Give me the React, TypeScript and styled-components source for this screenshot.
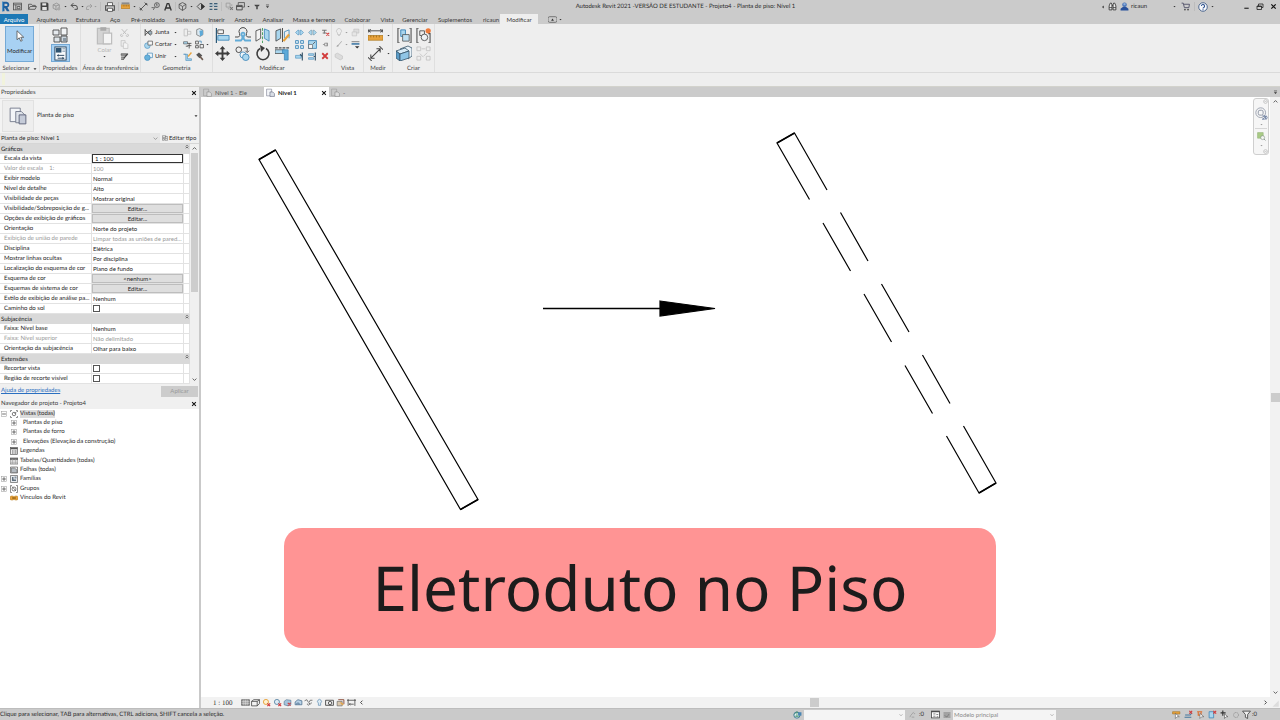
import React from 'react';
import styled, { createGlobalStyle } from 'styled-components';

const GlobalStyle = createGlobalStyle`
  *, *::before, *::after { box-sizing: border-box; }
  html, body, #root { margin: 0; padding: 0; }
  body {
    font: 6px/10px Lato, "Open Sans", sans-serif;
    color: #2b2b2b;
    background: #fff;
    text-rendering: geometricPrecision;
    overflow: hidden;
  }
  button, input, select { font: inherit; color: inherit; margin: 0; padding: 0; border: 0; background: none; border-radius: 0; outline: none; min-width: 0; }
  svg { display: block; flex: none; }
`;

/* ---------- icons, all on a 16 unit grid ---------- */

const K = '#4a4a4a';
const B = '#3e86b8';
const L = '#a9d6ee';
const G = '#bdbdbd';
const O = '#e8a33d';
const R = '#d23b3b';

const s = (stroke = K, w = 1.4) => ({ fill: 'none', stroke, strokeWidth: w });

const cross = (x: number, y: number, r = 2.5, w = 2) => (
  <path d={`M${x - r} ${y - r}l${2 * r} ${2 * r}M${x + r} ${y - r}l${-2 * r} ${2 * r}`} {...s(R, w)} />
);

const icons: Record<string, React.ReactNode> = {
  revit: <><path d="M3 1h6.5a4.3 4.3 0 0 1 1.3 8.3L14 15h-4L7.200 10H6.500v5H3z" fill="#1d5f9e" /><path d="M6.500 4h2.600a1.600 1.600 0 0 1 0 3.400H6.500z" fill="#cbcbcb" /><path d="M3 1h1.500v14H3z" fill="#4b96cf" /></>,
  home: <><rect x="1" y="2" width="14" height="12" {...s()} /><path d="M1 5h14M5 5v9M7.500 8h5v4h-5z" {...s()} /></>,
  open: <><path d="M1 13V4h5l1.500 2H13v2M1 13l3-5h11l-2.500 5z" {...s()} /></>,
  save: <><path d="M1 1h12l2 2v12H1z" fill="#444" /><path d="M4 2h7v4H4zM4 9h8v5H4z" fill="#e4e4e4" /></>,
  sync: <><path d="M2 5l6-3 5 3v6l-5 3-6-3zM2 5l5 2 6-2M7 7v7" {...s('#8d8d8d')} /><circle cx="12" cy="12" r="3" fill="#aaa" /></>,
  undo: <path d="M6 2L2 6l4 4M2 6h7a4 4 0 0 1 4 4v3H8" {...s('#444', 1.7)} />,
  redo: <path d="M10 2l4 4-4 4M14 6H7a4 4 0 0 0-4 4v3h5" {...s('#999', 1.6)} />,
  print: <><path d="M4 6V1h8v5" fill="#fff" stroke={K} strokeWidth="1.300" /><path d="M1 6h14v7H1z" {...s(K, 1.7)} /><path d="M4 10h8v5H4z" fill="#fff" stroke={K} strokeWidth="1.300" /></>,
  ruler: <><path d="M1 2h14" {...s()} /><rect x="0" y="5" width="16" height="7" fill={O} stroke="#9b6a18" strokeWidth=".8" /><path d="M4 5v3M7 5v3M10 5v3M13 5v3" {...s('#76500f', 0.8)} /></>,
  dim: <path d="M3 13L13 3M1 10l5 5M10 1l5 5M12 3h2v2M2 12v2h2" {...s('#444', 1.5)} />,
  tag: <><circle cx="10.500" cy="5.500" r="4.300" {...s()} /><path d="M10.500 3.200v4.500M9 4.200l1.500-1M7 9l-3 5M1 10h4" {...s()} /></>,
  letterA: <path d="M1.500 15L6.500 1h3l5 14M4.500 10h7" {...s('#333', 2.6)} />,
  cube: <><path d="M8 1l6 3v7l-6 4-6-4V4zM2 4l6 4 6-4M8 8v7" {...s()} /></>,
  section: <><path d="M8 2l6 6-6 6-6-6z" {...s('#444', 1.6)} /><path d="M9 2l7 6-7 6z" fill="#333" /></>,
  thin: <><path d="M1 3h5M9 3h6M1 8h5M9 8h6M1 13h5M9 13h6" {...s('#3c5d76', 2.2)} /><path d="M1 5.500h14" {...s('#5b93b8', 0.8)} /></>,
  closeWin: <><path d="M2 2h7v7H2z" {...s('#999')} /><path d="M5 12h3M12 4v3" {...s('#999')} /><path d="M9 9l5 5M14 9l-5 5" {...s('#777', 1.8)} /></>,
  windows: <><path d="M4 5V1h11v8h-3" {...s()} /><path d="M1 6h10v8H1zM1 8h10" {...s(K, 1.7)} /></>,
  funnelT: <path d="M1 2h14l-2 4h-3v8H6V6H3z" fill="#444" />,
  barDown: <><path d="M3 3h10" {...s('#333', 2)} /><path d="M3 7h10l-5 6z" fill="#333" /></>,
  caret: <path d="M2 5h12l-6 7z" fill="#333" />,
  caretG: <path d="M2 5h12l-6 7z" fill="#999" />,
  caretL: <path d="M11 2v12L4 8z" fill="#333" />,
  chev: <path d="M2 5l6 6 6-6" {...s('#777', 2)} />,
  chevU: <path d="M2 11l6-6 6 6" {...s('#444', 2.6)} />,
  chevD: <path d="M2 5l6 6 6-6" {...s('#444', 2.6)} />,
  chevL: <path d="M11 2L5 8l6 6" {...s('#333', 2.8)} />,
  chevR: <path d="M5 2l6 6-6 6" {...s('#333', 2.8)} />,
  dblUp: <path d="M3 6l5-5 5 5M3 13l5-5 5 5" {...s('#333', 2.6)} />,
  bino: <><path d="M2 14V7l2-5h2l1 3v9zM14 14V7l-2-5h-2L9 5v9z" fill="#eee" stroke="#333" strokeWidth="1.500" /><path d="M7 6h2M2 10h5M9 10h5" {...s('#333')} /></>,
  user: <><circle cx="8" cy="5" r="4" fill="#3f6cb3" /><path d="M1 15v-3l4-3h6l4 3v3z" fill="#27509b" /><path d="M6 2h4v4H6z" fill="#8daedb" /></>,
  cart: <><path d="M1 2h3l2 8h8l1-6H5" {...s('#4a4a63', 1.5)} /><circle cx="7" cy="13.500" r="1.500" fill="#444" /><circle cx="12.500" cy="13.500" r="1.500" fill="#444" /></>,
  help: <><circle cx="8" cy="8" r="6.800" fill="#f7f9fc" stroke="#2f4e7d" strokeWidth="1.300" /><path d="M5.500 6.500a2.500 2.500 0 1 1 3.700 2.200q-1.200.6-1.200 1.600M8 11.500v1.700" {...s('#2b4f8c', 1.7)} /></>,
  min: <path d="M3 12h10" {...s('#222', 2.6)} />,
  restore: <path d="M5 6V2h9v7h-3M2 6h9v7H2zM2 7h9" {...s('#222', 1.6)} />,
  close: <path d="M3 3l10 10M13 3L3 13" {...s('#111', 2.8)} />,
  pill: <><rect x="0" y="3" width="16" height="10" rx="3" {...s('#555', 1.3)} /><path d="M5.500 10h5L8 6z" fill="#333" /></>,

  cursor: <path d="M4 1v12l3-2.600L9 15l2-1-2-4.300h4z" fill="#fff" stroke="#555" strokeWidth="1.100" />,
  typeProps: <><path d="M1 3h6v5H1z" fill="#e6eaee" stroke={K} strokeWidth=".9" /><path d="M9 1h6v7H9z" fill="#f2f4f6" stroke={K} strokeWidth=".9" /><path d="M2 10h6v5H2z" fill="#dfe5ea" stroke={K} strokeWidth=".9" /><path d="M9 9h6v6H9z" fill="#ccd6de" stroke={K} strokeWidth=".9" /><path d="M11 11h3v3h-3z" fill="#8a98a4" /></>,
  props: <><rect x="2" y="1" width="12" height="14" fill="#f8fafc" stroke="#2f4b63" strokeWidth="1" /><path d="M3 2h6v5H3z" fill="#2f5471" /><path d="M10 3h3M10 5.500h3" {...s('#6f8ca3', 1)} /><path d="M5 10h7M5 13h7" {...s('#2f4b63', 1)} /><path d="M4 10l2-1.500v3zM12 13l-2-1.500v3z" fill="#2f4b63" /></>,
  paste: <><path d="M2 2h10v13H2z" fill="#d4d4d4" stroke={G} strokeWidth="1" /><path d="M4.500 1h5v3h-5z" fill="#aaa" /><path d="M7 6h7v9H7z" fill="#f4f4f4" stroke={G} strokeWidth="1" /></>,
  cut: <path d="M3 2l8 9M13 2L5 11M3 11a2 2 0 1 0 2 2M13 11a2 2 0 1 1-2 2" {...s(G, 1.7)} />,
  copyG: <><path d="M2 1h7v10H2z" {...s(G, 1.2)} /><path d="M6 5h5l3 3v7H6z" fill="#f4f4f4" stroke={G} strokeWidth="1.200" /></>,
  match: <><path d="M2 8h6l-1 6H2z" fill="#777" /><path d="M2 3h10v3H2z" fill="#999" stroke={K} /><path d="M6 12l8-9" {...s('#444', 2.2)} /><path d="M2 11h5" {...s('#ddd', 1)} /></>,
  cope: <><path d="M2 2v12M2 4l10 9M2 12L13 3" {...s('#444', 1.6)} /><path d="M7 6h7v5H9z" fill="#9fb5c2" stroke={K} /></>,
  cutG: <><circle cx="6" cy="10" r="5" fill={L} stroke={B} /><path d="M7 2h8v7H7z" fill="#f7f7f7" stroke={K} strokeWidth="1.200" /></>,
  join: <><path d="M6 2h9v8H6z" fill="#eef5f9" stroke={B} strokeWidth="1.200" /><circle cx="6" cy="10" r="5" fill="#67b2dc" stroke={B} /></>,
  wallG: <><path d="M2 2h6v12H2z" {...s(G)} /><path d="M8 6h6v5H8z" {...s(G)} /></>,
  paint: <><path d="M3 3l5-2 6 3v8l-5 3-6-3z" fill="#dce9f1" stroke={K} /><path d="M8 5l6-1v8l-5 3z" fill="#5ca9d8" /></>,
  beam: <><path d="M1 3h7v4H1z" fill={L} stroke={K} /><path d="M8 6h7M8 10h7M11 6v9M5 11h4" {...s(K, 1.5)} /></>,
  rects: <><path d="M1 2h5v5H1zM1 10h5v4H1zM9 8h6v6H9z" {...s()} /><path d="M7 2h4v4" {...s(B)} /></>,
  split: <><path d="M1 4h4v11h10v-3H8V4z" fill={L} stroke={B} /><path d="M9 8l6-7" {...s(O, 2.4)} /></>,
  hammer: <><path d="M2 5l5-4 6 5-5 5z" fill="#555" /><path d="M8 7l6 7" {...s('#6d5a50', 2.8)} /></>,

  align: <><path d="M1.500 0v16" {...s('#2b5876', 1.3)} /><path d="M3 2h6v4H3z" fill="#f5f5f5" stroke={K} strokeWidth=".9" /><path d="M3 8h12v5H3z" fill={L} stroke={B} strokeWidth=".9" /></>,
  offset: <><path d="M0 10h3.500q2-1 1-3.500a4 4 0 1 1 7 0q-1 2.500 1 3.500H16" {...s(K, 1)} /><path d="M0 13.500h6q2.500-2 1-5a1.600 1.600 0 1 1 2 0q-1.500 3 1 5h6" {...s('#63acd7', 1.8)} /></>,
  mirrorA: <><path d="M1 3v11l5-3V1z" fill="#f4f4f4" stroke={K} strokeWidth=".9" /><path d="M10 1v10l5 3V3z" fill={L} stroke={B} strokeWidth=".9" /><path d="M8 0v16" stroke="#47a05e" strokeDasharray="3 1.500" /></>,
  mirrorD: <><path d="M1 3v11l5-3V1z" fill={L} stroke={K} strokeWidth=".9" /><path d="M10 11V4l5-2v9" {...s(B, 0.9)} /><path d="M8 0v15" {...s(K, 1)} /><path d="M9 14l6-7" {...s(O, 2.4)} /></>,
  move: <path d="M8 0l3 3.500H9v3.500h3.500V5L16 8l-3.500 3V9H9v3.500h2L8 16l-3-3.500h2V9H3.500v2L0 8l3.500-3v2H7V3.500H5z" fill="#3d3d3d" />,
  copy: <><circle cx="4" cy="4" r="3" {...s(K, 1)} /><path d="M9 2h4v4M11 5l2 2 2-2" {...s(K, 1)} /><circle cx="8.500" cy="9.500" r="3.200" fill="#eef6fa" stroke={B} strokeWidth=".9" /><circle cx="11.500" cy="12" r="3.500" fill={L} stroke={B} strokeWidth=".9" /></>,
  rotate: <><path d="M5 3.500a6 6 0 1 0 6 0" {...s('#3d3d3d', 1.6)} /><path d="M5 0l5 3-4 4z" fill="#3d3d3d" /></>,
  trim: <><path d="M0 4h10v4H0z" fill={L} stroke={K} strokeWidth=".8" /><path d="M8 4h6v11h-4V8H8z" fill="#5ca9d8" stroke={B} strokeWidth=".8" /><path d="M0 2h16" stroke={K} strokeWidth="1.200" strokeDasharray="3 1" /></>,
  splitEl: <><path d="M1 8l4-4h2v8H5zM15 8l-4-4H9v8h2z" fill={L} stroke={B} /></>,
  splitGap: <><path d="M1 8l4-4h2v8H5zM15 8l-4-4H9v8h2z" fill={L} stroke="#6d8ea3" /></>,
  unpin: <><path d="M2 4h8M6 4v6M3 9h6" {...s('#777', 1.8)} />{cross(12, 11)}</>,
  array: <path d="M1 1h5v5H1zM10 1h5v5h-5zM1 10h5v5H1zM10 10h5v5h-5z" fill="#d7ecf7" stroke={B} strokeWidth="1.500" />,
  scale: <><path d="M1 1h14v14H1z" fill={L} stroke={B} strokeWidth="1.500" /><path d="M1 8h7v7H1z" fill="#f6f6f6" stroke={K} /><path d="M9 7l4-4" {...s()} /></>,
  pin: <path d="M2 8h4M6 5v6h6V5zM12 4v8" {...s('#777', 1.5)} />,
  trimOne: <><path d="M1 6h10v5H1z" fill={L} stroke={B} /><path d="M13 1v14M9 4l4 4" {...s('#35546a', 2)} /></>,
  trimMany: <><path d="M1 3h9v3H1zM1 10h9v3H1z" fill={L} stroke={B} /><path d="M13 1v14M10 8h3" {...s('#35546a', 2)} /></>,
  del: cross(8, 8, 5.5, 3.6),

  bulb: <path d="M5 10a5 5 0 1 1 6 0v3H5zM6 15h4" {...s(G, 1.3)} />,
  boxesG: <><path d="M5 2h9v7H5z" fill="#ddd" stroke={G} /><path d="M2 7h8v7H2z" fill="#e6e6e6" stroke={G} /></>,
  brushG: <path d="M3 14q0-5 4-5l6-7 1 1-6 7q0 4-5 4z" fill="#aaa" />,
  lineW: <><path d="M1 3h14" {...s('#333', 1)} /><path d="M1 7h14" {...s('#2b6b9d', 2.5)} /><path d="M7 11h8l-4 4z" fill="#333" /></>,
  boxG: <path d="M2 4l4-2 9 5v5l-4 2-9-5z" fill="#dcdcdc" stroke={G} />,
  measure: <><path d="M0 3h16M0 1v4M16 1v4M3 1.500L0 3l3 1.500M13 1.500L16 3l-3 1.500" {...s(K, 1)} /><rect x="0" y="8" width="16" height="5" fill={O} stroke="#a87317" strokeWidth=".7" /><path d="M3 8v2M6 8v2M9 8v2M12 8v2" {...s('#85590f', 0.7)} /></>,
  dimension: <path d="M3 13L13 3M0 12l4 4M12 0l4 4M3 9v4h4M9 3h4v4" {...s('#444', 1.1)} />,
  group: <><path d="M3 0H1v16h2M13 0h2v16h-2" {...s(K, 1.1)} /><path d="M4 2h5v7H4z" fill={L} stroke={B} /><path d="M6 7h7v7H6z" fill="#bfe0f2" stroke={K} strokeWidth=".8" /></>,
  groupNew: <><path d="M3 0H1v16h2M13 6h2v10h-2" {...s(K, 1.1)} /><path d="M4 3h5v5H4z" {...s(K, 0.9)} /><circle cx="9" cy="10" r="3.500" fill="#edf1f4" stroke={K} strokeWidth=".9" /><circle cx="13" cy="3" r="2.800" fill="#ee7b3b" /></>,
  assembly: <><path d="M4 4l8-3 4 2v8l-4 3" fill="#e9f2f8" stroke="#35546a" strokeWidth=".8" /><path d="M0 6l9-3 4 3-9 3z" fill="#d6eaf6" stroke="#35546a" strokeWidth=".8" /><path d="M0 6l4 3v7l-4-3z" fill="#5a9cc8" stroke="#35546a" strokeWidth=".8" /><path d="M4 9l9-3v7l-9 3z" fill="#8fc5e6" stroke="#35546a" strokeWidth=".8" /></>,
  parts: <><path d="M1 1h4v4H1zM11 1h4v4h-4zM1 11h4v4H1zM11 11h4v4h-4z" {...s('#c6c6c6', 1)} /><path d="M6 3h4M4 8l4 4M12 7l-4 4" {...s('#c6c6c6', 1)} /></>,

  plan: <><path d="M1 2h9v12H1z" fill="#f3f5f8" stroke="#72788a" strokeWidth="1" /><path d="M7 7h5l3 3v5H7z" fill="#d9dee6" stroke="#5b6178" strokeWidth="1" /></>,
  viewThumb: <><path d="M1 1h9v12H1z" fill="#f3f5f8" stroke="#72788a" strokeWidth=".8" /><path d="M6 4h5l3 3v7H6z" fill="#dfe3ea" stroke="#72788a" strokeWidth=".8" /><path d="M9 7h6v8H9z" fill="#c5cbd8" stroke="#5b6178" strokeWidth=".8" /></>,
  planG: <><path d="M1 2h9v12H1z" {...s('#999', 1)} /><path d="M7 7h5l3 3v5H7z" fill="#ddd" stroke="#888" strokeWidth="1" /></>,
  editType: <><path d="M1 2h9v5H1zM1 9h5v5H1zM8 9h7v5H8z" {...s('#555', 1.3)} /><path d="M8 4h7v4" {...s('#555', 1.2)} /></>,

  plus: <><rect x="1" y="1" width="14" height="14" fill="#fff" stroke="#999" strokeWidth="1.400" /><path d="M3 8h10M8 3v10" {...s('#444', 2)} /></>,
  minus: <><rect x="1" y="1" width="14" height="14" fill="#fff" stroke="#999" strokeWidth="1.400" /><path d="M3 8h10" {...s('#444', 2)} /></>,
  views: <><path d="M4 1H1v3M12 1h3v3M4 15H1v-3M12 15h3v-3" {...s('#555', 1.3)} /><circle cx="8" cy="8" r="3.500" {...s('#555', 1.5)} /><path d="M9 7l4-3" {...s('#555')} /></>,
  legend: <><rect x="1" y="1" width="14" height="14" fill="#eee" stroke="#555" strokeWidth="1.300" /><path d="M1 3h14" {...s('#555', 3)} /><path d="M4 8h3M4 12h3M9 8h4M9 12h4" {...s('#666', 2)} /></>,
  table: <><rect x="0" y="2" width="16" height="12" fill="#eee" stroke="#555" strokeWidth="1.300" /><path d="M0 4h16" {...s('#555', 3)} /><path d="M0 8h16M0 11h16M5 4v10M11 4v10" {...s('#999', 1)} /></>,
  sheet: <><path d="M1 2h14v12H1z" fill="#eee" stroke="#555" strokeWidth="1.300" /><path d="M3 4h6l5 4v5H3z" fill="#b4bbc1" stroke="#555" /></>,
  family: <><path d="M1 1h14v14H1z" fill="#e6eaee" stroke="#555" strokeWidth="1.300" /><path d="M4 4v8h8V9H7V4z" fill="#60707d" /><path d="M9 3h4v4H9z" fill="#8493a0" /></>,
  groups: <><path d="M4 1H1v14h3M12 1h3v14h-3" {...s('#555', 1.3)} /><path d="M4 3l8 9" {...s('#555')} /><circle cx="8" cy="8" r="4" {...s('#555', 1.4)} /></>,
  link: <><rect x="0" y="4" width="8" height="8" rx="3" fill={O} stroke="#b37511" /><rect x="8" y="4" width="8" height="8" rx="3" fill={O} stroke="#b37511" /><path d="M4 8h8" {...s('#7d5108', 1.8)} /></>,

  detail: <><path d="M1 3h14v10H1z" fill="#999" stroke="#444" /><path d="M1 6h14M1 9.500h14M5 3v10M8 3v10M11 3v10" {...s('#eee', 0.8)} /></>,
  style: <path d="M1 6l4-3h10v7l-4 4H1zM1 6h10v8M11 6l4-3" {...s('#444', 1.4)} />,
  sun: <><circle cx="7" cy="7" r="4.500" fill="#fff3cf" stroke={O} strokeWidth="1.700" />{cross(12, 12)}</>,
  shadow: <><circle cx="7" cy="7" r="4.500" fill="#dcebf5" stroke="#5c86a5" strokeWidth="1.600" />{cross(12, 12)}</>,
  crop: <><path d="M2 6l4-3 8 1v8l-5 2-7-2z" fill="#a5c4dc" stroke="#466a8a" />{cross(11, 11)}</>,
  cropShow: <path d="M2 7l5-4 7 2v7H2zM5 12v-3h4v3" fill="#b9d2e6" stroke="#466a8a" strokeWidth="1.300" />,
  glasses: <path d="M1 5l4-2 3 5M15 4l-4 0-2 4M6 10a2 2 0 1 0 3-1 2 2 0 1 0 4-1" {...s('#555', 1.3)} />,
  bulbB: <path d="M6 9a3.500 3.500 0 1 1 4 0v4H6z" fill="#dcebf5" stroke="#5b88ad" strokeWidth="1.200" />,
  camera: <><path d="M1 4h14v9H1z" fill="#eee" stroke="#444" strokeWidth="1.500" /><circle cx="9" cy="9" r="3" {...s('#444', 1.5)} /></>,
  analytic: <><path d="M2 6h9v8H2z" fill="#d9c7ad" stroke="#555" /><path d="M4 3h10v8" {...s('#8a4d3b', 1.7)} /><path d="M8 8l5 4" {...s(O, 2)} /></>,
  constraint: <path d="M2 2v12M0 4h16M14 2v12M4 11h8M6 9l-2 2 2 2" {...s('#444', 1.4)} />,

  globe: <><circle cx="7" cy="9" r="5.500" fill="#e9f2f7" stroke="#316f8f" strokeWidth="1.500" /><path d="M2 8l5-5 5 5M7 4v9M3 11h9" {...s('#30885c', 1.3)} /><path d="M9 4h6v6H9z" fill="#4a86b4" /></>,
  pencil: <path d="M2 14l2-4 7-8M6 14h6M11 6h3" {...s('#888', 1.3)} />,
  workset: <><rect x="1" y="2" width="14" height="12" fill="#fff" stroke="#444" strokeWidth="1.400" /><path d="M1 3h14" {...s('#444', 2)} /><path d="M4 7h4M4 11h4M10 7l1 2 2-2M10 12h3" {...s('#444', 1.2)} /></>,
  worksetG: <><rect x="1" y="2" width="14" height="12" fill="#a2a2a2" /><path d="M3 9l5 3 4-6" {...s('#777', 1.5)} /></>,
  selLink: <><path d="M1 3h13v4H1z" fill={O} stroke="#a3701c" /><path d="M6 6v9l3-3 4 0z" fill="#fff" stroke="#555" /></>,
  selUnder: <><path d="M1 13h12M2 9h9l3-4" {...s('#44779d', 1.8)} />{cross(12, 4)}</>,
  selPin: <><path d="M2 3h9M4 3v6h5V3" {...s('#dc6f31', 2)} /><path d="M7 6v9l3-3 4 0z" fill="#fff" stroke="#555" /></>,
  selFace: <><path d="M2 3h8v11H2z" fill={L} stroke={B} strokeWidth="1.400" />{cross(12, 4)}</>,
  drag: <><path d="M5 1v9M1 5h9" {...s('#333', 2)} /><path d="M8 7v8l3-3 3 0z" fill="#fff" stroke="#444" /></>,
  gear: <circle cx="8" cy="8" r="5" fill="none" stroke="#999" strokeWidth="2" strokeDasharray="2.500 1" />,
  filter: <path d="M1 2h14l-5 6v7l-4-2V8z" fill="#eee" stroke="#444" strokeWidth="1.500" />,
  wheel: <><circle cx="7" cy="7" r="6" {...s('#8f96a5', 1)} /><rect x="4" y="4" width="6" height="6" rx="2" {...s('#8f96a5', 1.2)} /><path d="M9 11h3v2l-3 2h3M13 11h1q2 2 0 4h-1z" {...s('#5f7398', 1)} /></>,
  zoomR: <><path d="M1 1h10v10H1z" fill="#a9cb85" stroke="#93b276" /><circle cx="10" cy="10" r="3.500" fill="#f3f5f0" stroke="#7b8b80" /><path d="M12.500 12.500L15 15" {...s('#7b8b80', 1.5)} /></>,
  ring: <><circle cx="8" cy="8" r="6" {...s('#aaa', 1.8)} /><path d="M5 8h6" {...s('#aaa', 1.6)} /></>,
  grip: <path d="M14 4v10H4z" fill="#ddd" />,
};

const Icon = ({ name, size = 10 }: { name: string; size?: number }) => (
  <svg width={size} height={size} viewBox="0 0 16 16" aria-hidden="true">{icons[name]}</svg>
);

/* ---------- shared parts ---------- */

const Window = styled.div`
  display: flex;
  flex-direction: column;
  height: 100vh;
  min-height: 520px;
  position: relative;
  background: #fff;
`;

const Slot = styled.button<{ $w: number }>`
  width: ${(p) => p.$w}px;
  height: 12px;
  flex: none;
  display: flex;
  align-items: center;
  justify-content: center;
`;

const Divider = styled.span<{ $w: number }>`
  width: ${(p) => p.$w}px;
  height: 9px;
  flex: none;
  background: linear-gradient(#bcbcbc, #bcbcbc) center / 1px 100% no-repeat;
`;

const Spacer = styled.span<{ $w: number }>`
  width: ${(p) => p.$w}px;
  flex: none;
`;

/* ---------- title bar ---------- */

const TitleBar = styled.header`
  display: flex;
  align-items: center;
  height: 13px;
  flex: none;
  padding-right: 1px;
  background: #cbcbcb;
`;

const Title = styled.h1`
  flex: 1;
  margin: 0;
  font-size: 6px;
  font-weight: 400;
  line-height: 10px;
  text-align: center;
  white-space: nowrap;
`;

const UserName = styled.span`
  width: 40px;
  padding-left: 1px;
`;

type Tool = [string, number, number?];

const quick: Tool[] = [
  ['revit', 11, 11], ['home', 12, 9], ['gap', 3], ['open', 12, 9], ['save', 12, 9], ['sync', 12, 9], ['caret', 6, 3],
  ['undo', 12, 9], ['caret', 4, 3], ['redo', 10, 8], ['caretG', 3, 3], ['|', 6], ['print', 14, 10], ['|', 2],
  ['ruler', 12, 9], ['caret', 6, 3], ['dim', 12, 9], ['tag', 12, 9], ['letterA', 13, 8], ['|', 2], ['cube', 12, 9],
  ['caret', 6, 3], ['section', 12, 9], ['thin', 14, 9], ['|', 3], ['closeWin', 12, 9], ['windows', 11, 9],
  ['caret', 4, 3], ['funnelT', 14, 6], ['barDown', 7, 5],
];

const Tools = ({ items }: { items: Tool[] }) => (
  <>
    {items.map(([name, w, size], i) =>
      name === '|' ? <Divider key={i} $w={w} /> :
      name === 'gap' ? <Spacer key={i} $w={w} /> :
      <Slot key={i} $w={w} aria-label={name}><Icon name={name} size={size} /></Slot>
    )}
  </>
);

/* ---------- ribbon ---------- */

const TabRow = styled.nav`
  display: flex;
  height: 11px;
  flex: none;
  padding-top: 1px;
  background: #cbcbcb;
`;

const Tab = styled.button<{ $w: number; $kind?: 'file' | 'active' }>`
  width: ${(p) => p.$w}px;
  height: 10px;
  flex: none;
  display: flex;
  justify-content: center;
  align-items: center;
  gap: 2px;
  line-height: 10px;
  padding-top: 1px;
  white-space: nowrap;
  color: ${(p) => (p.$kind === 'file' ? '#fff' : '#3a3a3a')};
  background: ${(p) => (p.$kind === 'file' ? '#1d78b5' : p.$kind === 'active' ? '#eeeeee' : 'none')};
`;

const tabs: [string, number, ('file' | 'active')?][] = [
  ['Arquivo', 28, 'file'], ['Arquitetura', 47], ['Estrutura', 26], ['Aço', 28], ['Pré-moldado', 38], ['Sistemas', 40],
  ['Inserir', 19], ['Anotar', 35], ['Analisar', 24], ['Massa e terreno', 58], ['Colaborar', 29], ['Vista', 30],
  ['Gerenciar', 26], ['Suplementos', 54], ['ricaun', 18], ['Modificar', 38, 'active'],
];

const Ribbon = styled.section`
  display: flex;
  height: 49px;
  flex: none;
  background: #eeeeee;
  border-bottom: 1px solid #dadada;
`;

const Panel = styled.div<{ $w: number }>`
  width: ${(p) => p.$w}px;
  flex: none;
  display: flex;
  flex-direction: column;
  border-right: 1px solid #dfdfdf;
`;

const PanelBody = styled.div`
  display: flex;
  justify-content: center;
  height: 40px;
  flex: none;
  padding-top: 2px;
`;

const PanelLabel = styled.div`
  display: flex;
  justify-content: center;
  align-items: center;
  gap: 3px;
  line-height: 10px;
  height: 10px;
  flex: none;
  white-space: nowrap;
  color: #444;
`;

const ToolGrid = styled.div<{ $cols: string; $row: number }>`
  display: grid;
  grid-template-columns: ${(p) => p.$cols};
  grid-auto-rows: ${(p) => p.$row}px;
`;

const ToolButton = styled.button`
  display: flex;
  align-items: center;
  justify-content: center;
`;

const TextTool = styled.button`
  display: flex;
  align-items: center;
  gap: 2px;
`;

const TextToolName = styled.span`
  width: 17px;
  text-align: left;
`;

const ModifyButton = styled.button`
  width: 29px;
  height: 36px;
  display: flex;
  flex-direction: column;
  align-items: center;
  justify-content: center;
  gap: 4px;
  padding-bottom: 3px;
  background: #a8d1f3;
  border: 1px solid #74a9d6;
  line-height: 10px;
`;

const PasteButton = styled.button`
  width: 28px;
  display: flex;
  flex-direction: column;
  align-items: center;
  gap: 1px;
  color: #b3b3b3;
  line-height: 8px;
`;

const PropsButton = styled.button`
  width: 19px;
  height: 18px;
  display: flex;
  align-items: center;
  justify-content: center;
  background: #a8d1f3;
  border: 1px solid #74a9d6;
`;

const Cells = ({ items }: { items: [string, number][] }) => (
  <>
    {items.map(([n, size], i) => (n ? <ToolButton key={i} aria-label={n}><Icon name={n} size={size} /></ToolButton> : <span key={i} />))}
  </>
);

const OptionsBar = styled.div`
  height: 14px;
  flex: none;
  background: linear-gradient(#f1f3dc, #f1f3dc) 2px 0 / 3px 12px no-repeat #eeeeee;
  border-bottom: 1px solid #d2d2cc;
`;

/* ---------- left side ---------- */

const Body = styled.div`
  flex: 1;
  min-height: 0;
  display: flex;
`;

const Side = styled.aside`
  width: 201px;
  flex: none;
  display: flex;
  flex-direction: column;
  border-right: 2px solid #c9c9c9;
  background: #fff;
`;

const PaneHead = styled.div`
  display: flex;
  align-items: center;
  justify-content: space-between;
  height: 11px;
  flex: none;
  padding: 1px 1px 0;
  background: #f0f0f0;
`;

const PaneTitle = styled.h2`
  margin: 0;
  font-size: 6px;
  line-height: 10px;
  font-weight: 400;
  color: #3a3a3a;
`;

const TypeRow = styled.div`
  display: flex;
  align-items: center;
  height: 35px;
  flex: none;
  padding-right: 1px;
  background: #f3f3f3;
  border-top: 1px solid #dcdcdc;
`;

const TypeThumb = styled.div`
  width: 32px;
  height: 32px;
  margin: 0 3px 0 2px;
  display: flex;
  align-items: center;
  justify-content: center;
  background: #eeeeee;
  border: 1px solid #e1e1e1;
`;

const TypeName = styled.span`
  flex: 1;
`;

const InstanceRow = styled.div`
  display: flex;
  height: 11px;
  flex: none;
  gap: 2px;
  background: #f0f0f0;
  border-bottom: 1px solid #d6d6d6;
`;

const SelectWrap = styled.label<{ $w: number; $bg: string }>`
  width: ${(p) => p.$w}px;
  height: 10px;
  flex: none;
  position: relative;
  background: ${(p) => p.$bg};

  select { width: 100%; height: 100%; padding-left: 1px; appearance: none; display: block; }
  svg { position: absolute; right: 2px; top: 3px; pointer-events: none; }
`;

const OptionSelect = styled.select`
  color: #8a8a8a;
`;

const EditType = styled.button`
  display: flex;
  align-items: center;
  gap: 1px;
  height: 10px;
  white-space: nowrap;
`;

const GridArea = styled.div`
  display: flex;
  flex: none;
  height: 240px;
`;

const PropTable = styled.table`
  width: 190px;
  table-layout: fixed;
  border-collapse: separate;
  border-spacing: 0;
  flex: none;
`;

const Row = styled.tr<{ $dim?: boolean }>`
  height: 10px;
  color: ${(p) => (p.$dim ? '#999' : '#222')};
`;

const NameCell = styled.th`
  height: 10px;
  padding: 0 0 0 4px;
  font-weight: 400;
  text-align: left;
  line-height: 9px;
  white-space: nowrap;
  overflow: hidden;
  border-bottom: 1px solid #e2e2e2;
  border-right: 1px solid #e2e2e2;
`;

const ValueCell = styled.td`
  height: 10px;
  padding: 0;
  line-height: 9px;
  border-bottom: 1px solid #e2e2e2;
  border-right: 1px solid #e2e2e2;
`;

const GroupCell = styled.th`
  height: 10px;
  padding: 1px 1px 0;
  font-weight: 400;
  text-align: left;
  line-height: 9px;
  color: #222;
  background: #d9d9d9;
`;

const GroupLine = styled.span`
  display: flex;
  justify-content: space-between;
`;

const Field = styled.input<{ $boxed?: boolean }>`
  display: block;
  width: 100%;
  height: 9px;
  line-height: 7px;
  padding-left: ${(p) => (p.$boxed ? 2 : 1)}px;
  padding-bottom: ${(p) => (p.$boxed ? 0 : 1)}px;
  border: ${(p) => (p.$boxed ? '1px solid #333' : '0')};
`;

const CellButton = styled.button`
  display: block;
  width: 100%;
  height: 9px;
  line-height: 7px;
  background: #dedede;
  border: 1px solid #bdbdbd;
`;

const Check = styled.input`
  appearance: none;
  display: block;
  width: 7px;
  height: 7px;
  margin-left: 1px;
  border: 1px solid #555;
  background: #fff;
`;

const SideScroll = styled.div`
  flex: 1;
  display: flex;
  flex-direction: column;
  align-items: center;
  background: #f0f0f0;
`;

const ScrollButton = styled.button`
  display: flex;
  align-items: center;
  justify-content: center;
  width: 9px;
  height: 9px;
  flex: none;
`;

const SideThumb = styled.div`
  width: 7px;
  height: 139px;
  margin-bottom: auto;
  background: #cdcdcd;
`;

const SideFoot = styled.div`
  display: flex;
  align-items: center;
  justify-content: space-between;
  height: 14px;
  flex: none;
  padding: 0 1px;
  background: #f0f0f0;
`;

const HelpLink = styled.a`
  color: #2a6fc0;
`;

const Apply = styled.button`
  width: 37px;
  height: 11px;
  line-height: 10px;
  color: #999;
  background: #cccccc;
`;

const Tree = styled.ul`
  display: grid;
  grid-template-rows: repeat(10, 1fr);
  height: 94px;
  margin: 0;
  padding: 0;
  list-style: none;
`;

const TreeItem = styled.li<{ $level: number }>`
  display: flex;
  align-items: center;
  gap: ${(p) => (p.$level ? 5 : 2)}px;
  padding-left: ${(p) => (p.$level ? 11 : 1)}px;
  white-space: nowrap;
`;

const Toggle = styled.span`
  width: 7px;
  flex: none;
`;

const TreeName = styled.span<{ $sel?: boolean }>`
  line-height: 8px;
  background: ${(p) => (p.$sel ? '#dcdcdc' : 'none')};
`;

type Prop = [string, string, ('group' | 'box' | 'btn' | 'check' | 'dim')?];

const properties: Prop[] = [
  ['Gráficos', '', 'group'],
  ['Escala da vista', '1 : 100', 'box'],
  ['Valor de escala\u00a0\u00a0\u00a0\u00a01:', '100', 'dim'],
  ['Exibir modelo', 'Normal'],
  ['Nível de detalhe', 'Alto'],
  ['Visibilidade de peças', 'Mostrar original'],
  ['Visibilidade/Sobreposição de g...', 'Editar...', 'btn'],
  ['Opções de exibição de gráficos', 'Editar...', 'btn'],
  ['Orientação', 'Norte do projeto'],
  ['Exibição de união de parede', 'Limpar todas as uniões de pared...', 'dim'],
  ['Disciplina', 'Elétrica'],
  ['Mostrar linhas ocultas', 'Por disciplina'],
  ['Localização do esquema de cor', 'Plano de fundo'],
  ['Esquema de cor', '<nenhum>', 'btn'],
  ['Esquemas de sistema de cor', 'Editar...', 'btn'],
  ['Estilo de exibição de análise pa...', 'Nenhum'],
  ['Caminho do sol', '', 'check'],
  ['Subjacência', '', 'group'],
  ['Faixa: Nível base', 'Nenhum'],
  ['Faixa: Nível superior', 'Não delimitado', 'dim'],
  ['Orientação da subjacência', 'Olhar para baixo'],
  ['Extensões', '', 'group'],
  ['Recortar vista', '', 'check'],
  ['Região de recorte visível', '', 'check'],
];

const tree: [string, number, string, string][] = [
  ['Vistas (todas)', 0, 'minus', 'views'],
  ['Plantas de piso', 1, 'plus', ''],
  ['Plantas de forro', 1, 'plus', ''],
  ['Elevações (Elevação da construção)', 1, 'plus', ''],
  ['Legendas', 0, '', 'legend'],
  ['Tabelas/Quantidades (todas)', 0, '', 'table'],
  ['Folhas (todas)', 0, '', 'sheet'],
  ['Famílias', 0, 'plus', 'family'],
  ['Grupos', 0, 'plus', 'groups'],
  ['Vínculos do Revit', 0, '', 'link'],
];

const PropertyRow = ({ item: [name, value, kind], id }: { item: Prop; id: string }) => {
  if (kind === 'group') {
    return (
      <Row>
        <GroupCell colSpan={3}><GroupLine>{name}<Icon name="dblUp" size={4} /></GroupLine></GroupCell>
      </Row>
    );
  }
  return (
    <Row $dim={kind === 'dim'}>
      <NameCell scope="row"><label htmlFor={id}>{name}</label></NameCell>
      <ValueCell>
        {kind === 'btn' ? <CellButton id={id}>{value}</CellButton>
          : kind === 'check' ? <Check id={id} type="checkbox" />
          : <Field id={id} type="text" $boxed={kind === 'box'} defaultValue={value} disabled={kind === 'dim'} />}
      </ValueCell>
      <ValueCell />
    </Row>
  );
};

/* ---------- document area ---------- */

const Doc = styled.main`
  flex: 1;
  min-width: 0;
  display: flex;
  flex-direction: column;
`;

const DocTabs = styled.div`
  display: flex;
  height: 10px;
  flex: none;
  background: #cbcbcb;
`;

const DocTab = styled.button<{ $w: number; $active?: boolean }>`
  width: ${(p) => p.$w}px;
  height: 10px;
  display: flex;
  align-items: center;
  gap: 3px;
  padding: 1px 2px 0;
  line-height: 9px;
  font-weight: ${(p) => (p.$active ? 700 : 400)};
  color: ${(p) => (p.$active ? '#222' : '#555')};
  background: ${(p) => (p.$active ? '#fff' : 'none')};
`;

const DocTabName = styled.span`
  flex: 1;
  text-align: left;
`;

const DocTabMenu = styled.button`
  width: 10px;
  margin-left: auto;
  display: flex;
  align-items: center;
  justify-content: center;
`;

const CanvasRow = styled.div`
  flex: 1;
  min-height: 0;
  display: flex;
`;

const Canvas = styled.div`
  flex: 1;
  min-width: 0;
  position: relative;
  background: #fff;
`;

const VScroll = styled.div`
  width: 10px;
  flex: none;
  display: flex;
  flex-direction: column;
  align-items: center;
  justify-content: space-between;
  background: #f2f2f2;
`;

const Thumb = styled.div`
  width: 9px;
  height: 9px;
  flex: none;
  background: #cccccc;
`;

const NavBar = styled.div`
  position: absolute;
  top: 1px;
  right: 1px;
  width: 16px;
  height: 57px;
  display: flex;
  flex-direction: column;
  align-items: center;
  justify-content: space-between;
  background: #f6f6f6;
  border: 1px solid #cfcfcf;
  border-radius: 3px;
`;

const NavEnd = styled.span`
  align-self: flex-end;
`;

const NavTool = styled.button`
  display: flex;
  flex-direction: column;
  align-items: center;
  gap: 3px;
`;

const NavLine = styled.span`
  width: 12px;
  height: 1px;
  background: #d6d6d6;
`;

const ViewBar = styled.div`
  display: flex;
  align-items: center;
  height: 11px;
  flex: none;
  background: #f2f2f2;
`;

const Scale = styled.span`
  width: 39px;
  padding-left: 12px;
  font-family: "Liberation Serif", serif;
  font-size: 7px;
  white-space: nowrap;
`;

const ViewIcons = styled.div`
  width: 127px;
  display: flex;
`;

const ViewIcon = styled.button`
  flex: 1;
  display: flex;
  align-items: center;
  justify-content: center;
`;

const HTrack = styled.div`
  flex: 1;
  display: flex;
  justify-content: center;
`;

const viewIcons = ['detail', 'style', 'sun', 'shadow', 'crop', 'cropShow', 'glasses', 'bulbB', 'camera', 'analytic', 'constraint', 'chevL'];

/* ---------- banner and status ---------- */

const Banner = styled.div`
  position: absolute;
  left: 50%;
  bottom: 72px;
  transform: translateX(-50%);
  width: 712px;
  height: 120px;
  display: flex;
  align-items: center;
  justify-content: center;
  border-radius: 18px;
  background: #ff9494;
  color: #1c1c1c;
  font: 62px/120px "Noto Sans", "Open Sans", sans-serif;
  white-space: nowrap;
`;

const StatusBar = styled.footer`
  display: flex;
  align-items: center;
  height: 12px;
  flex: none;
  background: #cacaca;
  border-top: 1px solid #bdbdbd;
`;

const StatusText = styled.span`
  flex: 1;
  white-space: nowrap;
`;

const Count = styled.span<{ $w: number }>`
  width: ${(p) => p.$w}px;
`;

const Drawing = () => (
  <svg width="100%" height="100%" role="img" aria-label="Eletroduto">
    <g transform="translate(-201 -97)" fill="none" stroke="#000" strokeWidth="1.200">
      <path d="M259 159.500L275.500 150L478 499.500L460.500 509.500Z" />
      <path d="M259 159.500L275.500 150M478 499.500L460.500 509.500" strokeWidth="1.600" />
      <path d="M543 308.500H662" strokeWidth="1.600" />
      <path d="M660 301L715 308.500L660 316Z" fill="#000" />
      <path d="M809.500 199.500L777 143L794.500 133L827 190M823 223l27.500 48M840.500 212.500l27.500 48.500M864 294l27.500 48M881.500 284l27.500 48M905 365.500l27.500 48M922.500 355l27.500 48.500M946.500 436L979 493L996 483L963.500 426" />
      <path d="M777 143L794.500 133M979 493L996 483" strokeWidth="1.600" />
    </g>
  </svg>
);

export default function App() {
  return (
    <Window>
      <GlobalStyle />
      <TitleBar>
        <Tools items={quick} />
        <Title>Autodesk Revit 2021 -VERSÃO DE ESTUDANTE - Projeto4 - Planta de piso: Nível 1</Title>
        <Tools items={[['caretL', 6, 4], ['bino', 12, 9], ['user', 12, 9]]} />
        <UserName>ricaun</UserName>
        <Tools items={[['caret', 8, 3], ['cart', 14, 9], ['|', 4], ['help', 14, 10], ['caret', 4, 3], ['gap', 25], ['min', 14, 7], ['restore', 14, 8], ['close', 12, 7]]} />
      </TitleBar>

      <TabRow>
        {tabs.map(([name, w, kind]) => <Tab key={name} $w={w} $kind={kind}>{name}</Tab>)}
        <Spacer $w={9} />
        <Tab $w={15} aria-label="Minimizar"><Icon name="pill" size={9} /><Icon name="caret" size={3} /></Tab>
      </TabRow>

      <Ribbon>
        <Panel $w={40}>
          <PanelBody>
            <ModifyButton><Icon name="cursor" size={12} />Modificar</ModifyButton>
          </PanelBody>
          <PanelLabel>Selecionar<Icon name="caret" size={4} /></PanelLabel>
        </Panel>
        <Panel $w={41}>
          <PanelBody>
            <ToolGrid $cols="19px" $row={18}>
              <ToolButton aria-label="Propriedades de tipo"><Icon name="typeProps" size={16} /></ToolButton>
              <PropsButton aria-label="Propriedades"><Icon name="props" size={15} /></PropsButton>
            </ToolGrid>
          </PanelBody>
          <PanelLabel>Propriedades</PanelLabel>
        </Panel>
        <Panel $w={60}>
          <PanelBody>
            <PasteButton><Icon name="paste" size={19} />Colar<Icon name="caret" size={3} /></PasteButton>
            <ToolGrid $cols="12px" $row={12}><Cells items={[['cut', 9], ['copyG', 9], ['match', 9]]} /></ToolGrid>
          </PanelBody>
          <PanelLabel>Área de transferência</PanelLabel>
        </Panel>
        <Panel $w={72}>
          <PanelBody>
            <ToolGrid $cols="37px 12px 12px 4px" $row={12}>
              <TextTool><Icon name="cope" size={9} /><TextToolName>Junta</TextToolName><Icon name="caret" size={3} /></TextTool>
              <Cells items={[['wallG', 9], ['paint', 9], ['', 0]]} />
              <TextTool><Icon name="cutG" size={9} /><TextToolName>Cortar</TextToolName><Icon name="caret" size={3} /></TextTool>
              <Cells items={[['beam', 9], ['rects', 9], ['caret', 3]]} />
              <TextTool><Icon name="join" size={9} /><TextToolName>Unir</TextToolName><Icon name="caret" size={3} /></TextTool>
              <Cells items={[['split', 9], ['hammer', 9], ['', 0]]} />
            </ToolGrid>
          </PanelBody>
          <PanelLabel>Geometria</PanelLabel>
        </Panel>
        <Panel $w={119}>
          <PanelBody>
            <ToolGrid $cols="repeat(4, 20px)" $row={18}>
              <Cells items={[['align', 15], ['offset', 16], ['mirrorA', 15], ['mirrorD', 15], ['move', 15], ['copy', 15], ['rotate', 16], ['trim', 15]]} />
            </ToolGrid>
            <ToolGrid $cols="repeat(3, 13px)" $row={12}>
              <Cells items={[['splitEl', 9], ['splitGap', 9], ['unpin', 9], ['array', 9], ['scale', 9], ['pin', 7], ['trimOne', 9], ['trimMany', 9], ['del', 8]]} />
            </ToolGrid>
          </PanelBody>
          <PanelLabel>Modificar</PanelLabel>
        </Panel>
        <Panel $w={32}>
          <PanelBody>
            <ToolGrid $cols="12px 4px 14px" $row={12}>
              <Cells items={[['bulb', 8], ['caretG', 3], ['boxesG', 9], ['brushG', 8], ['caretG', 3], ['lineW', 9], ['boxG', 9]]} />
            </ToolGrid>
          </PanelBody>
          <PanelLabel>Vista</PanelLabel>
        </Panel>
        <Panel $w={29}>
          <PanelBody>
            <ToolGrid $cols="20px 6px" $row={18}>
              <Cells items={[['measure', 15], ['caret', 3], ['dimension', 15], ['caret', 3]]} />
            </ToolGrid>
          </PanelBody>
          <PanelLabel>Medir</PanelLabel>
        </Panel>
        <Panel $w={42}>
          <PanelBody>
            <ToolGrid $cols="19px 19px" $row={18}>
              <Cells items={[['group', 15], ['groupNew', 15], ['assembly', 16], ['parts', 15]]} />
            </ToolGrid>
          </PanelBody>
          <PanelLabel>Criar</PanelLabel>
        </Panel>
      </Ribbon>
      <OptionsBar />

      <Body>
        <Side>
          <PaneHead>
            <PaneTitle>Propriedades</PaneTitle>
            <Slot $w={8} aria-label="Fechar propriedades"><Icon name="close" size={6} /></Slot>
          </PaneHead>
          <TypeRow>
            <TypeThumb><Icon name="viewThumb" size={18} /></TypeThumb>
            <TypeName>Planta de piso</TypeName>
            <Icon name="caret" size={4} />
          </TypeRow>
          <InstanceRow>
            <SelectWrap $w={160} $bg="#e6e6e6">
              <select aria-label="Instância" defaultValue="v"><option value="v">Planta de piso: Nível 1</option></select>
              <Icon name="chev" size={5} />
            </SelectWrap>
            <EditType><Icon name="editType" size={6} />Editar tipo</EditType>
          </InstanceRow>
          <GridArea>
            <PropTable>
              <colgroup><col width="92" /><col width="92" /><col width="6" /></colgroup>
              <tbody>
                {properties.map((p, i) => <PropertyRow key={p[0]} item={p} id={`p${i}`} />)}
              </tbody>
            </PropTable>
            <SideScroll>
              <ScrollButton aria-label="Para cima"><Icon name="chevU" size={5} /></ScrollButton>
              <SideThumb />
              <ScrollButton aria-label="Para baixo"><Icon name="chevD" size={5} /></ScrollButton>
            </SideScroll>
          </GridArea>
          <SideFoot>
            <HelpLink href="#ajuda">Ajuda de propriedades</HelpLink>
            <Apply>Aplicar</Apply>
          </SideFoot>
          <PaneHead>
            <PaneTitle>Navegador de projeto - Projeto4</PaneTitle>
            <Slot $w={8} aria-label="Fechar navegador"><Icon name="close" size={6} /></Slot>
          </PaneHead>
          <Tree>
            {tree.map(([name, level, toggle, icon]) => (
              <TreeItem key={name} $level={level}>
                <Toggle>{toggle && <Icon name={toggle} size={6} />}</Toggle>
                {icon && <Icon name={icon} size={8} />}
                <TreeName $sel={icon === 'views'}>{name}</TreeName>
              </TreeItem>
            ))}
          </Tree>
        </Side>

        <Doc>
          <DocTabs>
            <DocTab $w={63}><Icon name="planG" size={9} /><DocTabName>Nível 1 - Ele</DocTabName></DocTab>
            <DocTab $w={65} $active><Icon name="plan" size={9} /><DocTabName>Nível 1</DocTabName><Icon name="close" size={6} /></DocTab>
            <DocTab $w={24}><Icon name="planG" size={9} /><DocTabName>-</DocTabName></DocTab>
            <DocTabMenu aria-label="Lista de vistas"><Icon name="barDown" size={5} /></DocTabMenu>
          </DocTabs>
          <CanvasRow>
            <Canvas>
              <Drawing />
              <NavBar>
                <NavEnd><Icon name="ring" size={5} /></NavEnd>
                <NavTool aria-label="Roda de navegação"><Icon name="wheel" size={13} /><Icon name="caretG" size={3} /></NavTool>
                <NavLine />
                <NavTool aria-label="Zoom de região"><Icon name="zoomR" size={9} /><Icon name="caretG" size={3} /></NavTool>
                <NavEnd><Icon name="ring" size={5} /></NavEnd>
              </NavBar>
            </Canvas>
            <VScroll>
              <ScrollButton aria-label="Rolar para cima"><Icon name="chevU" size={5} /></ScrollButton>
              <Thumb />
              <ScrollButton aria-label="Rolar para baixo"><Icon name="chevD" size={5} /></ScrollButton>
            </VScroll>
          </CanvasRow>
          <ViewBar>
            <Scale>1 : 100</Scale>
            <ViewIcons>
              {viewIcons.map((n) => <ViewIcon key={n} aria-label={n}><Icon name={n} size={n === 'chevL' ? 5 : 9} /></ViewIcon>)}
            </ViewIcons>
            <HTrack><Thumb /></HTrack>
            <ScrollButton aria-label="Rolar para a direita"><Icon name="chevR" size={5} /></ScrollButton>
            <Icon name="grip" size={10} />
          </ViewBar>
        </Doc>
      </Body>

      <StatusBar>
        <StatusText>Clique para selecionar, TAB para alternativas, CTRL adiciona, SHIFT cancela a seleção.</StatusText>
        <Tools items={[['globe', 14, 9]]} />
        <SelectWrap $w={101} $bg="#f4f4f4">
          <OptionSelect aria-label="Conjunto de trabalho"><option /></OptionSelect>
          <Icon name="chev" size={4} />
        </SelectWrap>
        <Tools items={[['pencil', 14, 7]]} />
        <Count $w={10}>:0</Count>
        <Tools items={[['workset', 12, 9], ['worksetG', 12, 8]]} />
        <SelectWrap $w={103} $bg="#f4f4f4">
          <OptionSelect aria-label="Opção de projeto"><option>Modelo principal</option></OptionSelect>
          <Icon name="chev" size={4} />
        </SelectWrap>
        <Spacer $w={114} />
        <Tools items={[['selLink', 12, 9], ['selUnder', 12, 9], ['selPin', 12, 9], ['selFace', 12, 9], ['drag', 12, 9], ['gear', 11, 8], ['filter', 11, 9]]} />
        <Count $w={28}>:0</Count>
      </StatusBar>

      <Banner>Eletroduto no Piso</Banner>
    </Window>
  );
}
